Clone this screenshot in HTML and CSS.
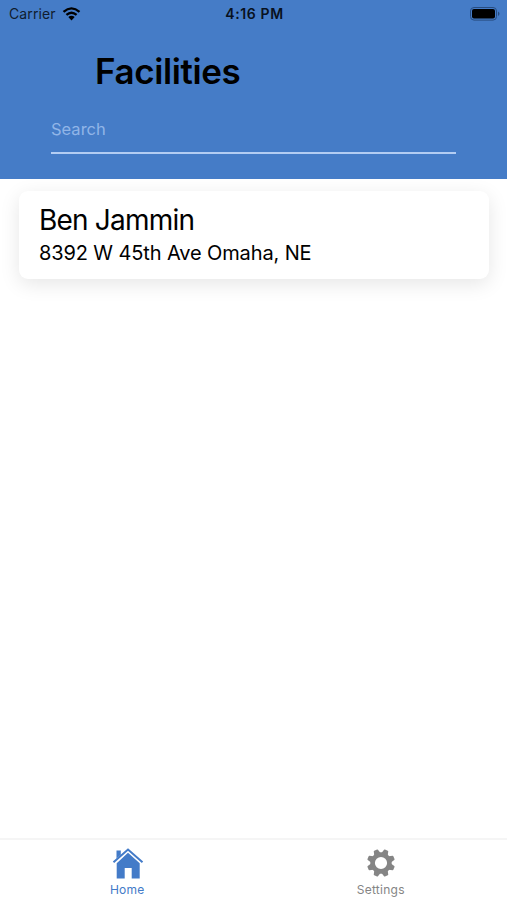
FILE: index.html
```html
<!DOCTYPE html>
<html lang="en">
<head>
  <meta charset="UTF-8">
  <meta name="viewport" content="width=device-width, initial-scale=1">
  <title>Facilities</title>
  <link rel="stylesheet" href="styles.css">
</head>
<body>
  <header class="header">
    <div class="status-bar">
      <div class="carrier">
        <span>Carrier</span>
        <svg class="wifi" width="19" height="14" viewBox="0 0 18 14">
          <path d="M1 4.8Q9-2 17 4.8M3.9 7.9Q9 3.5 14.1 7.9" fill="none" stroke="#000" stroke-width="2.3"/>
          <path d="M5.8 10Q9 7.4 12.2 10L9 13.5z"/>
        </svg>
      </div>
      <span class="time">4:16 PM</span>
      <div class="battery">
        <svg width="30" height="14" viewBox="0 0 30 14">
          <rect x="0.5" y="0.5" width="26" height="12.6" rx="3.5" fill="none" stroke="#274c80"/>
          <rect x="2" y="2" width="23" height="9.6" rx="2"/>
          <path d="M28 4.5Q31 6.7 28 9z" fill="#274c80"/>
        </svg>
      </div>
    </div>
    <h1>Facilities</h1>
    <input class="search" type="text" placeholder="Search">
  </header>

  <main class="list">
    <div class="card">
      <h2>Ben Jammin</h2>
      <p>8392 W 45th Ave Omaha, NE</p>
    </div>
  </main>

  <nav class="tabs">
    <a class="tab active">
      <svg width="32" height="32" viewBox="0 0 32 32" fill="currentColor">
        <path d="M1.5 15.3L16 2.6l14.5 12.7" fill="none" stroke="currentColor" stroke-width="2"/>
        <path d="M4.5 3.5h4.3v4.2l-4.3 3.8z"/>
        <path d="M16 5.8L27.7 16.2V31.5h-8V21h-7v10.500h-8V16.200z"/>
      </svg>
      <span>Home</span>
    </a>
    <a class="tab">
      <svg width="32" height="32" viewBox="0 0 32 32">
        <g transform="translate(16 16)" fill="none" stroke="currentColor">
          <circle r="8.4" stroke-width="4.6"/>
          <g fill="currentColor" stroke-linejoin="round" stroke-width="1.6">
            <path id="tooth" d="M-2.500-9.500L-1.500-13.200H1.500L2.500-9.500z" transform="rotate(22.5)"/>
            <use href="#tooth" transform="rotate(45)"/>
            <use href="#tooth" transform="rotate(90)"/>
            <use href="#tooth" transform="rotate(135)"/>
            <use href="#tooth" transform="rotate(180)"/>
            <use href="#tooth" transform="rotate(225)"/>
            <use href="#tooth" transform="rotate(270)"/>
            <use href="#tooth" transform="rotate(315)"/>
          </g>
        </g>
      </svg>
      <span>Settings</span>
    </a>
  </nav>
</body>
</html>
```
FILE: styles.css
```css
* {
  box-sizing: border-box;
}
body {
  margin: 0;
  height: 900px;
  display: flex;
  flex-direction: column;
  font-family: Inter, "Liberation Sans", sans-serif;
  background: white;
  color: #000;
  overflow: hidden;
}
.header {
  height: 179px;
  background: #457cc7;
}
.status-bar {
  height: 27px;
  padding: 0 7px 0 9px;
  display: grid;
  grid-template-columns: 1fr auto 1fr;
  align-items: center;
  font-size: 14px;
  color: #101c2e;
}
.carrier {
  display: flex;
  align-items: center;
  gap: 6px;
  letter-spacing: 0.1px;
}
.time {
  font-weight: 600;
  letter-spacing: 0.65px;
  color: #081120;
}
.battery {
  display: flex;
  justify-content: flex-end;
}
h1 {
  margin: 22px 0 0 95px;
  font-size: 35px;
  line-height: 44px;
  font-weight: 600;
  letter-spacing: -0.4px;
}
.search {
  display: block;
  width: 405px;
  height: 38px;
  margin: 23px 0 0 51px;
  padding: 0 0 10px;
  border: none;
  border-bottom: 2px solid #b3cdf3;
  background: none;
  font-family: inherit;
  font-size: 16.5px;
  outline: none;
}
.search::placeholder {
  color: #91b5e7;
  opacity: 1;
}
.list {
  flex: 1;
  padding: 12px 18px 0 19px;
}
.card {
  height: 88px;
  padding: 11px 20px;
  border-radius: 9px;
  background: white;
  box-shadow: 0 5px 20px rgba(0, 0, 0, 0.1);
}
h2 {
  margin: 0;
  font-size: 28px;
  line-height: 37px;
  font-weight: 400;
  letter-spacing: -0.8px;
}
.card p {
  margin: 1px 0 0;
  font-size: 20px;
  line-height: 26px;
  letter-spacing: -0.12px;
}
.tabs {
  height: 62px;
  display: flex;
  border-top: 2px solid #f5f5f5;
}
.tab {
  flex: 1;
  display: flex;
  flex-direction: column;
  align-items: center;
  padding: 7px 0 0 1px;
  font-size: 12px;
  line-height: 16px;
  letter-spacing: 0.25px;
  color: #858585;
}
.tab svg {
  margin-left: 1px;
}
.tab span {
  margin-top: 3px;
}
.tab.active {
  color: #437bc8;
}
```
